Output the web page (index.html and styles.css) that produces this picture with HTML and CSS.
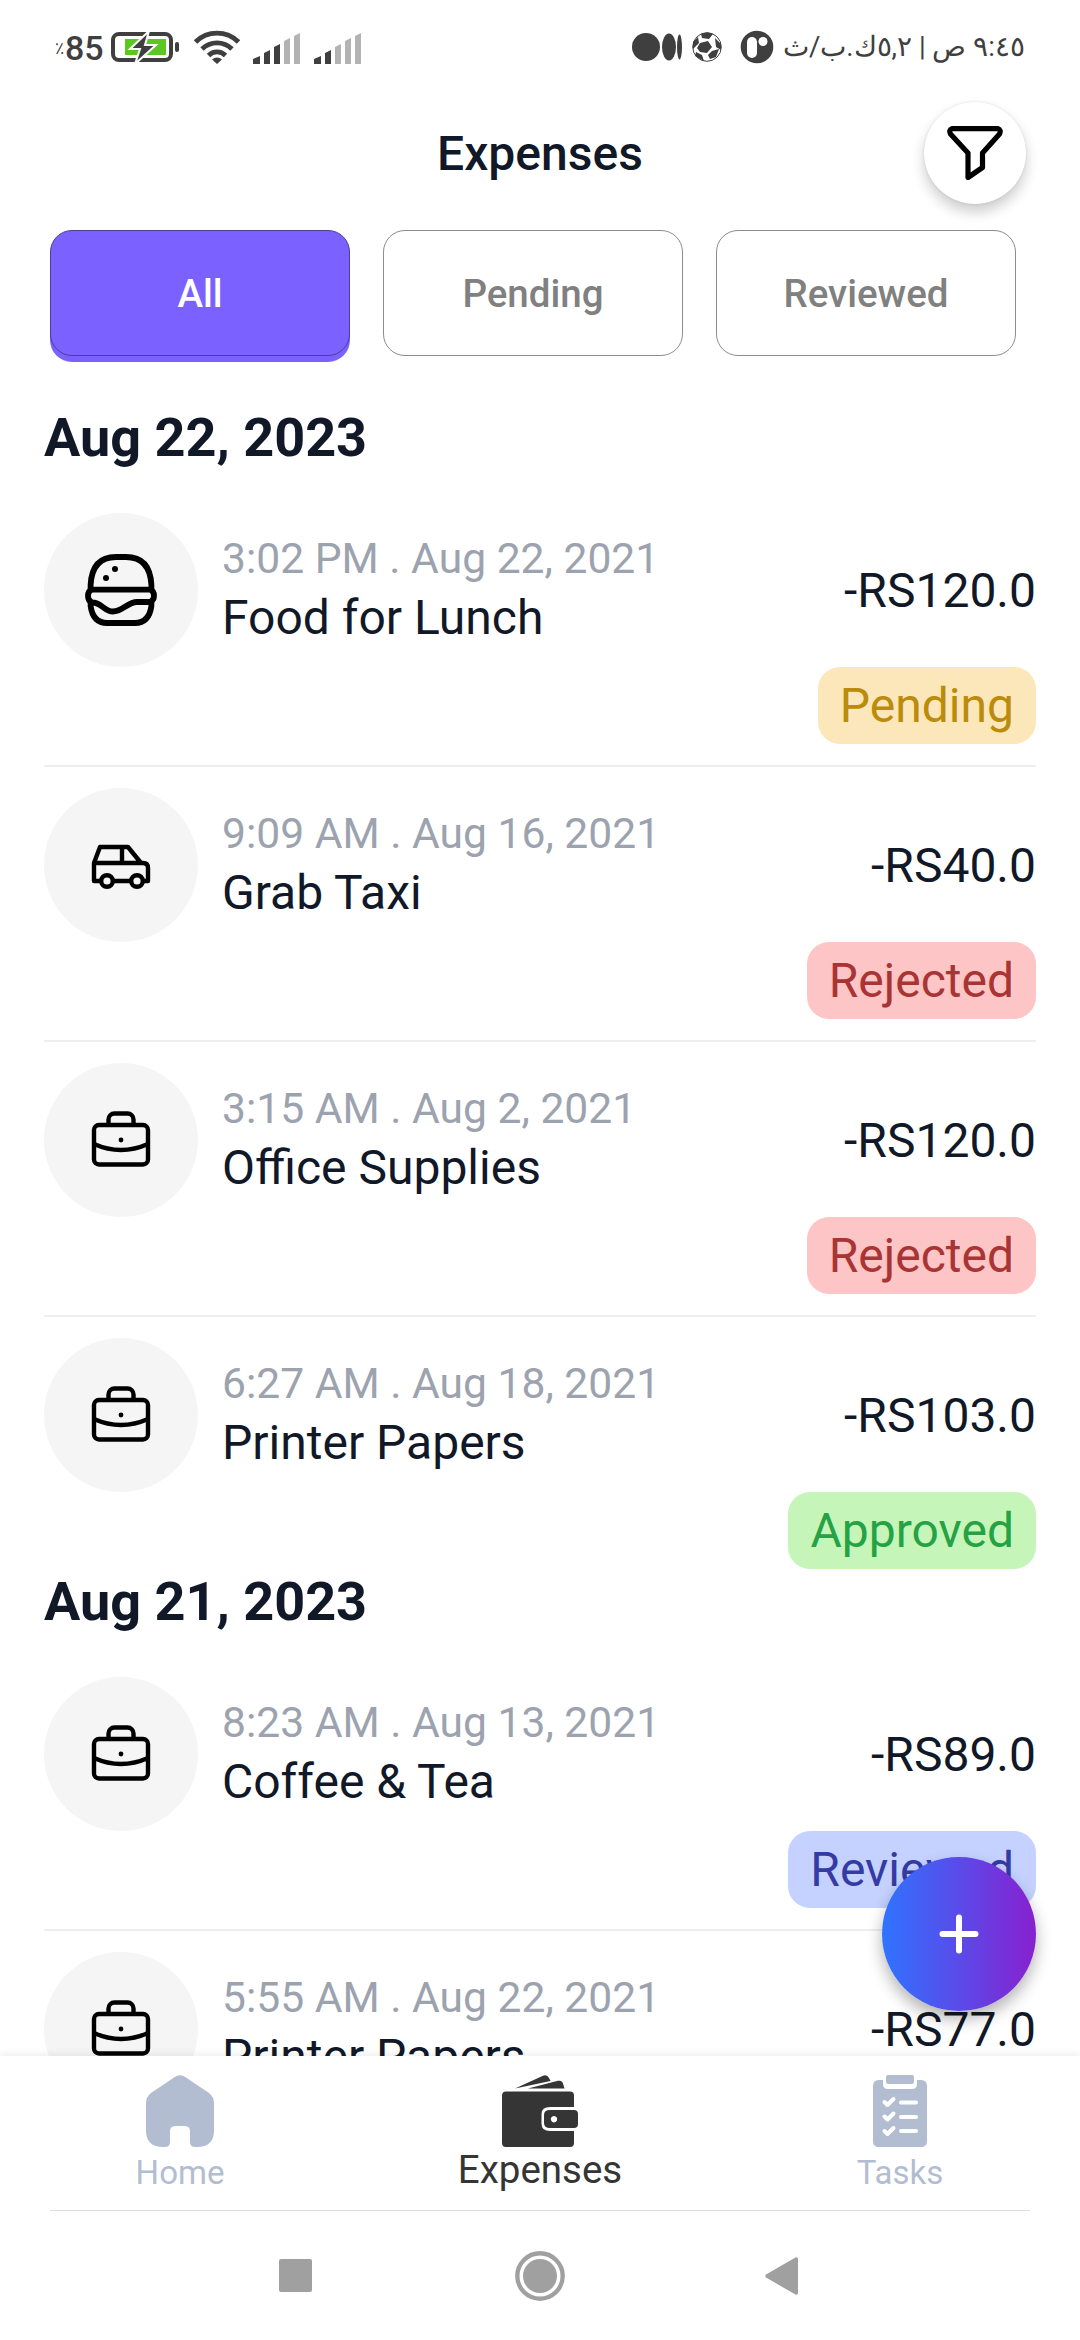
FILE: index.html
```html
<!DOCTYPE html>
<html lang="en">
<head>
<meta charset="utf-8">
<title>Expenses</title>
<link rel="stylesheet" href="styles.css">
</head>
<body>
<svg class="defs" aria-hidden="true">
  <symbol id="briefcase" viewBox="0 0 60 56">
    <g fill="none" stroke="#000" stroke-width="4.400" stroke-linejoin="round">
      <rect x="3" y="14" width="54" height="39.500" rx="5"/>
      <path d="M17.500 14V8.500a6 6 0 0 1 6-6h13a6 6 0 0 1 6 6V14M3 33q27 12 54 0"/>
    </g>
    <circle cx="30" cy="29" r="2.400"/>
  </symbol>
  <symbol id="car" viewBox="0 0 60 45">
    <g fill="none" stroke="#000" stroke-width="4.400" stroke-linejoin="round">
      <path d="M10 37H3V19L9 3h28l13 16h2q5 0 5 5v13h-5M22 37h18M3 19h47M31 3v16"/>
      <circle cx="16" cy="37" r="5.800"/>
      <circle cx="46" cy="37" r="5.800"/>
    </g>
  </symbol>
</svg>
<div class="screen">
  <header class="status">
    <div class="status-left">
      <span class="battery-text"><small>٪</small>85</span>
      <svg class="battery" viewBox="0 0 68 32" width="68" height="32">
        <rect x="2" y="3" width="58" height="26" rx="6" fill="none" stroke="#3f3f3f" stroke-width="4"/>
        <rect x="64" y="11" width="4" height="10" rx="2" fill="#3f3f3f"/>
        <path fill="#5ac820" d="M14 8h41v16H14z"/>
        <path fill="#3f3f3f" stroke="#fff" stroke-width="2" d="M38 0L19 18h10L24 33l21-19H34z"/>
      </svg>
      <svg class="wifi" viewBox="0 0 46 34" width="46" height="34">
        <g fill="none" stroke="#3f3f3f" stroke-width="4.800">
          <path d="M1.500 12a30.500 30.500 0 0 1 43 0"/>
          <path d="M8 19a21.200 21.200 0 0 1 30 0"/>
          <path d="M14.500 25.500a12 12 0 0 1 17 0"/>
        </g>
        <path fill="#3f3f3f" d="M18 29.500q5-4 10 0l-5 4.500z"/>
      </svg>
      <svg class="signal" viewBox="0 0 48 31" width="48" height="31">
        <g fill="#3f3f3f"><path d="M0 26l7-3v8H0zM11 20l6-3v14h-6zM21 14l6-3v20h-6z"/></g>
        <g fill="#b3b3b3"><path d="M31 8l6-3v26h-6zM41 3l6-3v31h-6z"/></g>
      </svg>
      <svg class="signal" viewBox="0 0 48 31" width="48" height="31">
        <g fill="#3f3f3f"><path d="M0 26l7-3v8H0zM11 20l6-3v14h-6z"/></g>
        <g fill="#b3b3b3"><path d="M21 14l6-3v20h-6zM31 8l6-3v26h-6zM41 3l6-3v31h-6z"/></g>
      </svg>
    </div>
    <div class="status-right">
      <svg viewBox="0 0 142 34" width="142" height="34">
        <g fill="#3f3f3f">
          <circle cx="14" cy="17" r="14"/>
          <ellipse cx="37" cy="17" rx="7" ry="13.500"/>
          <ellipse cx="47.500" cy="17" rx="2.500" ry="12.500"/>
          <circle cx="75" cy="17" r="14.300" fill="none" stroke="#3f3f3f"/>
          <path d="M68 13l8-2 4 6-5 6-7-1-3-4zM69 4q7-3 12 0l-4 5-7-1zM61 12l5-5 1 6-6 6zM83 8l6 6v6l-5-3zM64 22l6 3 2 6-9-5zM80 21l7-2-3 8-6 2-2-4z"/>
          <circle cx="125" cy="17" r="16.300"/>
        </g>
        <rect x="115" y="7" width="10" height="21" rx="5" fill="#fff"/>
        <circle cx="131" cy="11.500" r="4.500" fill="#fff"/>
      </svg>
      <span class="clock" dir="rtl">٩:٤٥ ص | ٥,٢ك.ب/ث</span>
    </div>
  </header>

  <div class="titlebar">
    <h1>Expenses</h1>
    <button class="filter" aria-label="Filter">
      <svg viewBox="0 0 56 54" width="56" height="54">
        <path fill="none" stroke="#000" stroke-width="5.200" stroke-linejoin="round" d="M5 2.600H51Q54.500 4 52.500 8L35.500 27V41.500L21 51.500V27L3.500 8Q1.500 4 5 2.600Z"/>
      </svg>
    </button>
  </div>

  <nav class="tabs">
    <button class="tab active">All</button>
    <button class="tab">Pending</button>
    <button class="tab">Reviewed</button>
  </nav>

  <main class="list">
    <section>
      <h2>Aug 22, 2023</h2>
      <article class="row">
        <div class="info">
          <div class="avatar">
            <svg viewBox="0 0 72 72" width="72" height="72">
              <g fill="none" stroke="#000" stroke-width="5.800" stroke-linejoin="round">
                <path d="M5.600 35.500V31Q7 3 31 3H41Q65 3 66.400 31V35.500"/>
                <path d="M7 35.600H65Q69 37 69 41.800T65 48H52C43 48 37 57.500 28 57.500S17 48.500 7 48.500Q3 47 3 42T7 35.600Z"/>
                <path d="M5.600 48V52Q8 69 22 69H50Q64 69 66.400 52V48"/>
              </g>
              <circle cx="30" cy="15" r="3"/><circle cx="21" cy="24" r="3"/>
            </svg>
          </div>
          <div class="text"><time>3:02 PM . Aug 22, 2021</time><h3>Food for Lunch</h3></div>
          <span class="amount">-RS120.0</span>
        </div>
        <span class="badge pending">Pending</span>
      </article>
      <article class="row">
        <div class="info">
          <div class="avatar"><svg class="car" width="60" height="45"><use href="#car"/></svg></div>
          <div class="text"><time>9:09 AM . Aug 16, 2021</time><h3>Grab Taxi</h3></div>
          <span class="amount">-RS40.0</span>
        </div>
        <span class="badge rejected">Rejected</span>
      </article>
      <article class="row">
        <div class="info">
          <div class="avatar"><svg class="case" width="60" height="56"><use href="#briefcase"/></svg></div>
          <div class="text"><time>3:15 AM . Aug 2, 2021</time><h3>Office Supplies</h3></div>
          <span class="amount">-RS120.0</span>
        </div>
        <span class="badge rejected">Rejected</span>
      </article>
      <article class="row">
        <div class="info">
          <div class="avatar"><svg class="case" width="60" height="56"><use href="#briefcase"/></svg></div>
          <div class="text"><time>6:27 AM . Aug 18, 2021</time><h3>Printer Papers</h3></div>
          <span class="amount">-RS103.0</span>
        </div>
        <span class="badge approved">Approved</span>
      </article>
    </section>
    <section>
      <h2>Aug 21, 2023</h2>
      <article class="row">
        <div class="info">
          <div class="avatar"><svg class="case" width="60" height="56"><use href="#briefcase"/></svg></div>
          <div class="text"><time>8:23 AM . Aug 13, 2021</time><h3>Coffee &amp; Tea</h3></div>
          <span class="amount">-RS89.0</span>
        </div>
        <span class="badge reviewed">Reviewed</span>
      </article>
      <article class="row">
        <div class="info">
          <div class="avatar"><svg class="case" width="60" height="56"><use href="#briefcase"/></svg></div>
          <div class="text"><time>5:55 AM . Aug 22, 2021</time><h3>Printer Papers</h3></div>
          <span class="amount">-RS77.0</span>
        </div>
      </article>
    </section>
  </main>

  <button class="fab" aria-label="Add">
    <svg viewBox="0 0 40 40" width="40" height="40"><path stroke="#fff" stroke-width="6" stroke-linecap="round" d="M20 3.500v33M3.500 20h33"/></svg>
  </button>

  <nav class="bottom">
    <a class="item">
      <svg viewBox="0 0 68 72" width="68" height="72"><path fill="#b3bdd1" d="M28 2.500Q34-2 40 2.500L63 18Q68 22 68 28V57Q67 72 51 72H49Q44 72 44 67V56Q44 51 38 51H30Q24 51 24 56V67Q24 72 19 72H17Q1 72 0 57V28Q0 22 5 18Z"/></svg>
      <span>Home</span>
    </a>
    <a class="item current">
      <svg viewBox="0 0 76 72" width="76" height="72">
        <g fill="#353535">
          <path d="M13 13.500L41 .8Q45-1 47 3L48.500 6Z"/>
          <path d="M26 13.500L56 5.800Q60 5 61 8.500L62.500 13.500Z"/>
          <path d="M4 16.500H68Q72 16.500 72 20.500V32H48Q39.500 32 39.500 39V49Q39.500 56 48 56H72V68Q72 72 68 72H4Q0 72 0 68V20.500Q0 16.500 4 16.500Z"/>
          <path fill-rule="evenodd" d="M48 35H72Q76 35 76 39V49Q76 53 72 53H48Q42 53 42 48V40Q42 35 48 35ZM52 41a3.200 3.200 0 1 0 .01 0Z"/>
        </g>
      </svg>
      <span>Expenses</span>
    </a>
    <a class="item">
      <svg viewBox="0 0 54 72" width="54" height="72">
        <path fill="#b3bdd1" d="M6 5H10V9Q10 14 15 14H39Q44 14 44 9V5H48Q54 5 54 11V66Q54 72 48 72H6Q0 72 0 66V11Q0 5 6 5Z"/>
        <rect x="13" width="28" height="9" rx="2" fill="#b3bdd1"/>
        <path fill="none" stroke="#fff" stroke-width="4" stroke-linecap="round" stroke-linejoin="round" d="M11.500 27l3 3 6-6M28 27.500h15M11.500 41.500l3 3 6-6M28 42h15M11.500 56l3 3 6-6M28 56h15"/>
      </svg>
      <span>Tasks</span>
    </a>
  </nav>

  <footer class="system">
    <svg viewBox="0 0 33 33" width="33" height="33"><rect width="33" height="33" rx="2" fill="#a0a0a0"/></svg>
    <svg viewBox="0 0 50 50" width="50" height="50"><circle cx="25" cy="25" r="22.700" fill="none" stroke="#a0a0a0" stroke-width="4.400"/><circle cx="25" cy="25" r="17" fill="#a0a0a0"/></svg>
    <svg class="back" viewBox="0 0 33 38" width="33" height="38"><path fill="#a0a0a0" d="M1 17.500L30 .7Q33-.5 33 2V36Q33 38.500 30 37.300L1 20.500Q-.5 19 1 17.500Z"/></svg>
  </footer>
</div>
</body>
</html>
```
FILE: styles.css
```css
* { box-sizing: border-box; margin: 0; }
body { background: #fff; font-family: Roboto, "Noto Sans", sans-serif; color: #111827; }
button { font: inherit; border: 0; padding: 0; }
svg { display: block; flex: none; }
.defs { position: absolute; width: 0; height: 0; }

.screen { width: 1080px; height: 2340px; display: flex; flex-direction: column; overflow: hidden; position: relative; }

.status { height: 94px; padding: 0 55px; display: flex; justify-content: space-between; align-items: center; color: #3f3f3f; flex: none; }
.status-left, .status-right { display: flex; align-items: center; }
.battery-text { width: 56px; font-size: 34px; font-weight: 500; line-height: 40px; display: flex; align-items: center; margin-top: 2px; }
.battery-text small { font-size: 17px; width: 10px; }
.battery { margin-top: -1px; }
.wifi { margin-left: 15px; }
.signal { margin: 2px 0 0 13px; }
.status-right { gap: 9px; }
.clock { font-size: 27.6px; line-height: 40px; white-space: nowrap; }

.titlebar { height: 136px; padding: 8px 55px 0; display: grid; grid-template-columns: 101px 1fr 101px; flex: none; }
h1 { grid-column: 2; text-align: center; font-size: 48px; font-weight: 500; line-height: 103px; }
.filter { width: 102px; height: 102px; border-radius: 50%; background: #fff; display: grid; place-items: center; box-shadow: 0 8px 14px rgba(0,0,0,.2), 0 0 3px rgba(0,0,0,.1); }

.tabs { display: flex; gap: 33px; padding-left: 50px; flex: none; }
.tab { width: 300px; height: 126px; border: 1px solid #8c8c8c; border-radius: 22px; background: #fff; color: #808080; font-size: 38.5px; font-weight: 500; }
.tab.active { background: #7b61ff; border-color: #4d3f99; color: #fff; box-shadow: 0 6px 0 #7b61ff; }

.list { padding: 49px 44px 0; height: 1700px; overflow: hidden; flex: none; }
h2 { font-size: 54px; line-height: 65px; height: 87px; font-weight: 700; }
.row { height: 275px; padding-top: 21px; display: flex; flex-direction: column; align-items: flex-end; }
.row:not(:last-child) { border-bottom: 2px solid #eee; }
.row:last-child { height: 252px; }
.info { width: 100%; height: 154px; display: flex; flex: none; align-items: center; }
.avatar { width: 154px; height: 154px; border-radius: 50%; background: #f5f5f5; display: grid; place-items: center; margin-right: 24px; flex: none; }
.case { margin-bottom: 2px; }
.car { margin-top: 2px; }
.text { flex: 1; }
time { display: block; color: #9ca3af; font-size: 42.6px; line-height: 54px; }
h3 { font-size: 48px; font-weight: 400; line-height: 64px; padding-top: 1px; margin-bottom: -1px; }
.amount { font-size: 48px; }
.badge { height: 77px; line-height: 77px; padding: 0 22px; border-radius: 22px; font-size: 48px; flex: none; }
.pending { background: #fbe7b9; color: #bb8b0c; }
.rejected { background: #fdc5c6; color: #a93434; }
.approved { background: #c6f5ba; color: #25a244; }
.reviewed { background: #c5d2ff; color: #343ba5; }

.fab { position: absolute; left: 882px; top: 1857px; width: 154px; height: 154px; border-radius: 50%; background: linear-gradient(90deg, #2f73ff, #5a4be9 50%, #8820cf); display: grid; place-items: center; box-shadow: 0 8px 16px rgba(0,0,0,.3); }

.bottom { height: 155px; padding: 19px 0 0; display: grid; grid-template-columns: repeat(3, 1fr); flex: none; background: #fff; box-shadow: 0 -2px 7px rgba(0,0,0,.07); position: relative; }
.bottom::after { content: ""; position: absolute; left: 50px; right: 50px; bottom: 0; height: 1px; background: #ddd; }
.item { display: flex; flex-direction: column; align-items: center; color: #b3bdd1; font-size: 33px; line-height: 52px; }
.item.current { color: #353535; font-size: 38.5px; line-height: 46px; }

.system { flex: 1; background: #fff; position: relative; display: flex; justify-content: center; align-items: center; gap: 203px; }
.back { margin: 0 3px 0 -3px; }
```
